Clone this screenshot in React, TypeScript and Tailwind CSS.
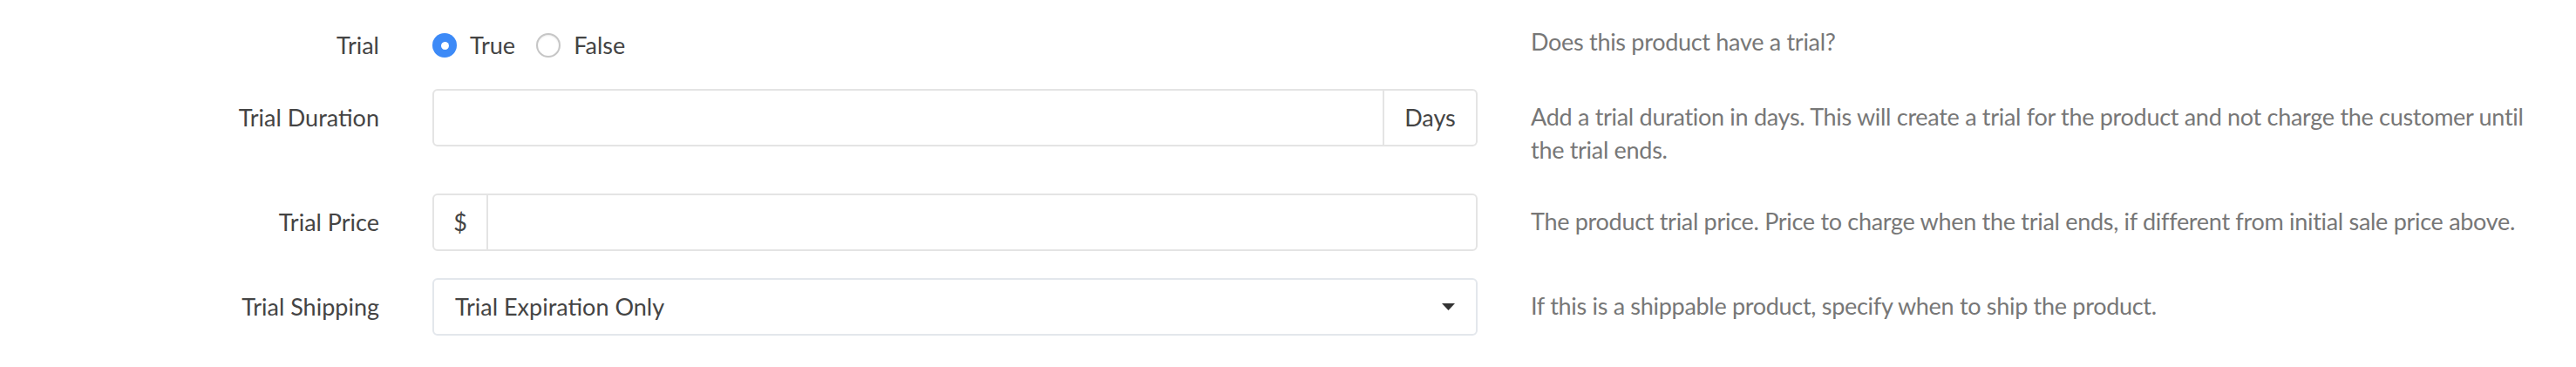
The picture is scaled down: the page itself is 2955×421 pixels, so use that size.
import { useState } from "react";

const font = { fontFamily: "Lato, 'Noto Sans', sans-serif" };

function Label({ children, top = false }: { children: React.ReactNode; top?: boolean }) {
  return (
    <div className={`text-right text-[27px] leading-[38px] text-[#444] ${top ? "" : "pt-[14px]"}`}>
      {children}
    </div>
  );
}

function Help({ children, first = false }: { children: React.ReactNode; first?: boolean }) {
  return (
    <p className={`text-[27px] leading-[38px] tracking-[-0.3px] text-[#777] ${first ? "-mt-[4px]" : "pt-[13px]"}`}>
      {children}
    </p>
  );
}

function Radio({ checked, label, onClick }: { checked: boolean; label: string; onClick: () => void }) {
  return (
    <button type="button" onClick={onClick} className="flex items-center gap-[15px]">
      {checked ? (
        <span className="flex h-[28px] w-[28px] items-center justify-center rounded-full bg-[#3d8af7]">
          <span className="h-[9px] w-[9px] rounded-full bg-white" />
        </span>
      ) : (
        <span className="h-[28px] w-[28px] rounded-full border-2 border-[#c6c6c6] bg-white shadow-[inset_0_1px_2px_rgba(0,0,0,0.08)]" />
      )}
      <span className="text-[27px] leading-[38px] text-[#444]">{label}</span>
    </button>
  );
}

export default function App() {
  const [trial, setTrial] = useState(true);

  return (
    <div style={font} className="min-h-[421px] w-[2955px] bg-white pt-[33px] pr-[40px]">
      <div className="grid grid-cols-[435px_1199px_1fr] items-start gap-x-[61px] gap-y-[31px]">
        {/* trial */}
        <Label top>Trial</Label>
        <div className="flex h-[38px] items-center gap-[24px]">
          <Radio checked={trial} label="True" onClick={() => setTrial(true)} />
          <Radio checked={!trial} label="False" onClick={() => setTrial(false)} />
        </div>
        <Help first>Does this product have a trial?</Help>

        {/* duration */}
        <Label>Trial Duration</Label>
        <div className="flex h-[66px] overflow-hidden rounded-[6px] border-2 border-[#e4e4e4]">
          <input className="flex-1 px-[24px] text-[27px] outline-none" />
          <span className="flex w-[107px] items-center justify-center border-l-2 border-[#e4e4e4] text-[27px] text-[#444]">
            Days
          </span>
        </div>
        <Help>
          Add a trial duration in days. This will create a trial for the product and not charge the customer until the
          trial ends.
        </Help>

        {/* price */}
        <Label>Trial Price</Label>
        <div className="flex h-[66px] overflow-hidden rounded-[6px] border-2 border-[#e4e4e4]">
          <span className="flex w-[62px] items-center justify-center border-r-2 border-[#e4e4e4] text-[27px] text-[#444]">
            $
          </span>
          <input className="flex-1 px-[24px] text-[27px] outline-none" />
        </div>
        <Help>The product trial price. Price to charge when the trial ends, if different from initial sale price above.</Help>

        {/* shipping */}
        <Label>Trial Shipping</Label>
        <div className="flex h-[66px] items-center justify-between rounded-[6px] border-2 border-[#e3e7ec] pl-[24px] pr-[24px]">
          <span className="text-[27px] text-[#444]">Trial Expiration Only</span>
          <svg width="15" height="8" viewBox="0 0 15 8">
            <path d="M0 0h15L7.5 8z" fill="#333" />
          </svg>
        </div>
        <Help>If this is a shippable product, specify when to ship the product.</Help>
      </div>
    </div>
  );
}
